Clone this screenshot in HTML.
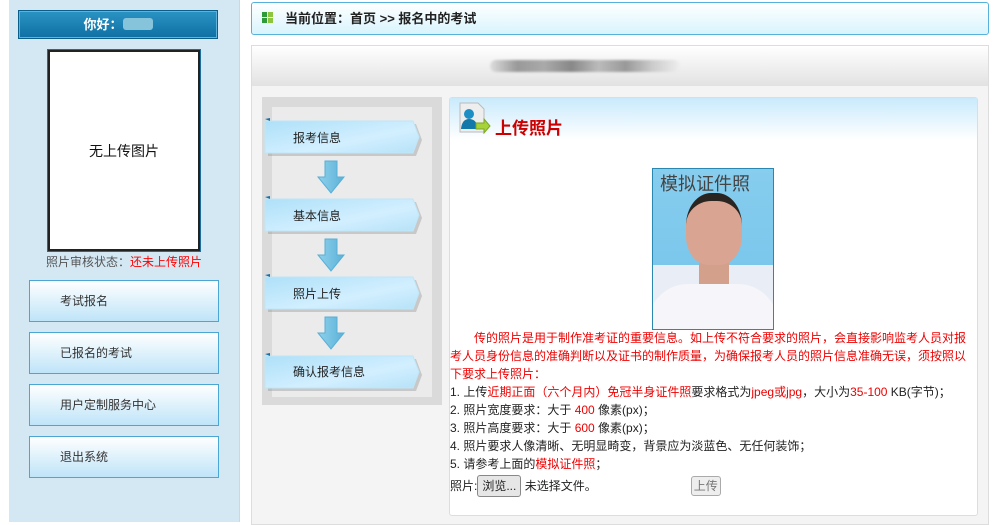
<!DOCTYPE html>
<html><head><meta charset="utf-8"><style>
*{margin:0;padding:0;box-sizing:border-box}
body{width:998px;height:522px;overflow:hidden;background:#fff;font-family:"Liberation Sans","Noto Sans CJK SC",sans-serif;font-size:12px;color:#333;position:relative}
.a{position:absolute}
#side{left:9px;top:0;width:231px;height:522px;background:#d4e8f4;border-right:1px solid #c8d8e4}
#hello{left:18px;top:10px;width:200px;height:29px;background:linear-gradient(#2b93c4,#0e6fa3);border:1px solid #0a5e8c;box-shadow:inset 0 0 0 1px #5fb2da;color:#fff;font-weight:bold;font-size:13px;text-align:center;line-height:28px}
#pic{left:48px;top:50px;width:152px;height:201px;background:#fff;border:2px solid #222;outline:1px solid #1a6fa0;text-align:center;line-height:198px;font-size:14px;color:#111}
.mb{left:29px;width:190px;height:42px;background:linear-gradient(#fff,#bfe4f8);border:1px solid #4aa7d4;line-height:40px;padding-left:30px;font-size:12px;color:#333}
#crumb{left:251px;top:2px;width:738px;height:33px;border:1px solid #56b2dc;border-radius:3px;background:linear-gradient(#fff,#d8f4fd);line-height:31px;padding-left:33px;font-size:13px;font-weight:bold;color:#222}
#panel{left:251px;top:45px;width:738px;height:480px;background:#f4f4f4;border:1px solid #ddd}
#phead{left:252px;top:46px;width:736px;height:40px;background:linear-gradient(#fff,#e2e2e2)}
#steps{left:262px;top:97px;width:180px;height:308px;background:#dadada}
#stepsin{left:272px;top:107px;width:160px;height:290px;background:#ebebeb}
#up{left:449px;top:97px;width:529px;height:419px;background:#fff;border:1px solid #ddd;border-radius:3px}
#uphead{left:450px;top:98px;width:527px;height:42px;background:linear-gradient(#c9eafc,#fff)}
#txt{left:450px;top:329px;width:525px;line-height:18px;font-size:12px;color:#222}
.r{color:#e00}
</style></head><body>
<div class="a" id="side"></div>
<div class="a" id="hello">你好：<span style="display:inline-block;width:30px;height:12px;background:#86c4dc;vertical-align:-1px;border-radius:3px"></span></div>
<div class="a" id="pic">无上传图片</div>
<div class="a" style="left:46px;top:253px;font-size:12px;color:#555">照片审核状态：<span style="color:#f00">还未上传照片</span></div>
<div class="a mb" style="top:280px">考试报名</div>
<div class="a mb" style="top:332px">已报名的考试</div>
<div class="a mb" style="top:384px">用户定制服务中心</div>
<div class="a mb" style="top:436px">退出系统</div>

<div class="a" id="crumb">当前位置：首页 &gt;&gt; 报名中的考试</div>
<div class="a" style="left:262px;top:12px;width:11px;height:11px;background:linear-gradient(90deg,#2e9a3a 5px,transparent 5px,transparent 6px,#8cc63f 6px);"></div>
<div class="a" style="left:262px;top:17px;width:11px;height:1px;background:#e8f9fe"></div>

<div class="a" id="panel"></div>
<div class="a" id="phead"></div>
<div class="a" style="left:490px;top:60px;width:190px;height:12px;background:linear-gradient(90deg,#ddd,#999,#aaa,#888,#bbb,#999,#ccc,#eee);filter:blur(1px);border-radius:6px"></div>

<div class="a" id="steps"></div>
<div class="a" id="stepsin"></div>
<svg class="a" style="left:262px;top:112px" width="170" height="285">
<defs><linearGradient id="g" x1="0" y1="0" x2="1" y2="1"><stop offset="0" stop-color="#aee0f8"/><stop offset="0.6" stop-color="#d2efff"/><stop offset="1" stop-color="#b6e2f8"/></linearGradient>
<linearGradient id="ag" x1="0" x2="1"><stop offset="0" stop-color="#8fd0ec"/><stop offset="1" stop-color="#5ab2d8"/></linearGradient></defs>
<g id="s1"><path d="M3 9 H151 L157 25 L151 41 H3 Z" fill="#888" opacity=".35" transform="translate(3,3)"/><path d="M3 9 H151 L157 25 L151 41 H3 Z" fill="url(#g)" stroke="#bfe6f7"/><path d="M3 7 L8 6 V9 Z" fill="#1a6fa8"/></g>
<use href="#s1" y="78"/><use href="#s1" y="156"/><use href="#s1" y="235"/>
<g id="ar"><path d="M63 49 H75 V65 H82 L69 81 L56 65 H63Z" fill="url(#ag)" stroke="#58afd6"/></g>
<use href="#ar" y="78"/><use href="#ar" y="156"/>
</svg>
<div class="a" style="left:293px;top:129px;color:#222">报考信息</div>
<div class="a" style="left:293px;top:207px;color:#222">基本信息</div>
<div class="a" style="left:293px;top:285px;color:#222">照片上传</div>
<div class="a" style="left:293px;top:363px;color:#222">确认报考信息</div>

<div class="a" id="up"></div>
<div class="a" id="uphead"></div>
<svg class="a" style="left:459px;top:102px" width="32" height="32">
<path d="M1 1 H19 L25 7 V30 H1Z" fill="#eee" stroke="#bbb"/>
<circle cx="10" cy="12" r="5" fill="#1d8fc4"/><path d="M2 27 Q3 17 10 17 Q18 17 19 27Z" fill="#1478a8"/>
<path d="M17 21 H25 V17 L31 24 L25 31 V27 H17Z" fill="#a6d23a" stroke="#7aa820"/>
</svg>
<div class="a" style="left:495px;top:114px;font-size:17px;font-weight:bold;color:#c00">上传照片</div>

<div class="a" style="left:652px;top:168px;width:122px;height:162px;border:1px solid #2a88b0;background:linear-gradient(#86cdee,#7bc7ec 60%,#e9eef6 60%);overflow:hidden">
<div class="a" style="left:7px;top:1px;font-size:18px;color:#444">模拟证件照</div>
<div class="a" style="left:-5px;top:115px;width:130px;height:60px;background:#f5f5fa;border-radius:40px 40px 0 0"></div>
<div class="a" style="left:46px;top:85px;width:30px;height:30px;background:#d3a08c"></div>
<div class="a" style="left:33px;top:24px;width:56px;height:72px;background:#d9a592;border-radius:45% 45% 40% 40%;border-top:8px solid #2b2522"></div>
</div>

<div class="a" id="txt">
<div class="r" style="text-indent:24px">传的照片是用于制作准考证的重要信息。如上传不符合要求的照片，会直接影响监考人员对报考人员身份信息的准确判断以及证书的制作质量，为确保报考人员的照片信息准确无误，须按照以下要求上传照片：</div>
<div>1. 上传<span class="r">近期正面（六个月内）免冠半身证件照</span>要求格式为<span class="r">jpeg或jpg</span>，大小为<span class="r">35-100</span> KB(字节)；</div>
<div>2. 照片宽度要求：大于 <span class="r">400</span> 像素(px)；</div>
<div>3. 照片高度要求：大于 <span class="r">600</span> 像素(px)；</div>
<div>4. 照片要求人像清晰、无明显畸变，背景应为淡蓝色、无任何装饰；</div>
<div>5. 请参考上面的<span class="r">模拟证件照</span>；</div>
<div style="margin-top:2px">照片:<span style="display:inline-block;border:1px solid #888;border-radius:3px;background:#e6e6e6;padding:0 4px;line-height:20px">浏览...</span> 未选择文件。<span style="display:inline-block;margin-left:94px;border:1px solid #aaa;border-radius:3px;background:#eee;color:#777;padding:0 2px;line-height:18px">上传</span></div>
</div>
</body></html>
